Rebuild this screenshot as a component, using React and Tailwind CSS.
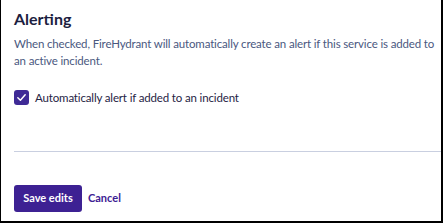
import React from "react";

export default function App() {
  return (
    <div className="w-[443px] h-[223px] bg-white border-l border-r-2 border-b-2 border-black box-border overflow-hidden" style={{ fontFamily: '"Lato", "Open Sans", sans-serif' }}>
      <div className="pl-[13px] pt-[8px] flex flex-col">
        <h2 className="text-[16px] leading-[22px] font-bold text-[#1c1e3f]">Alerting</h2>
        <p className="mt-[5px] pr-[4px] text-[11.5px] leading-[17px] tracking-[-0.15px] text-[#4a5880]">
          When checked, FireHydrant will automatically create an alert if this service is added to an active incident.
        </p>
        <label className="mt-[20px] flex items-center gap-[6px]">
          <span className="w-[15px] h-[15px] rounded-[3px] bg-[#3f2a96] flex items-center justify-center">
            <svg width="11" height="11" viewBox="0 0 12 12" fill="none">
              <path d="M2 6.3 L4.8 9 L10 3" stroke="white" strokeWidth="1.6" strokeLinecap="round" strokeLinejoin="round" />
            </svg>
          </span>
          <span className="text-[11.5px] leading-[17px] tracking-[-0.15px] text-[#1f2344]">Automatically alert if added to an incident</span>
        </label>
        <div className="mt-[45px] h-px bg-[#c9cfe0]" />
        <div className="mt-[33px] flex items-center gap-[6px]">
          <button className="h-[27px] w-[68px] rounded-[3px] bg-[#3d2193] text-white text-[11px] font-bold">Save edits</button>
          <button className="text-[11px] font-bold text-[#3d2193]">Cancel</button>
        </div>
      </div>
    </div>
  );
}
